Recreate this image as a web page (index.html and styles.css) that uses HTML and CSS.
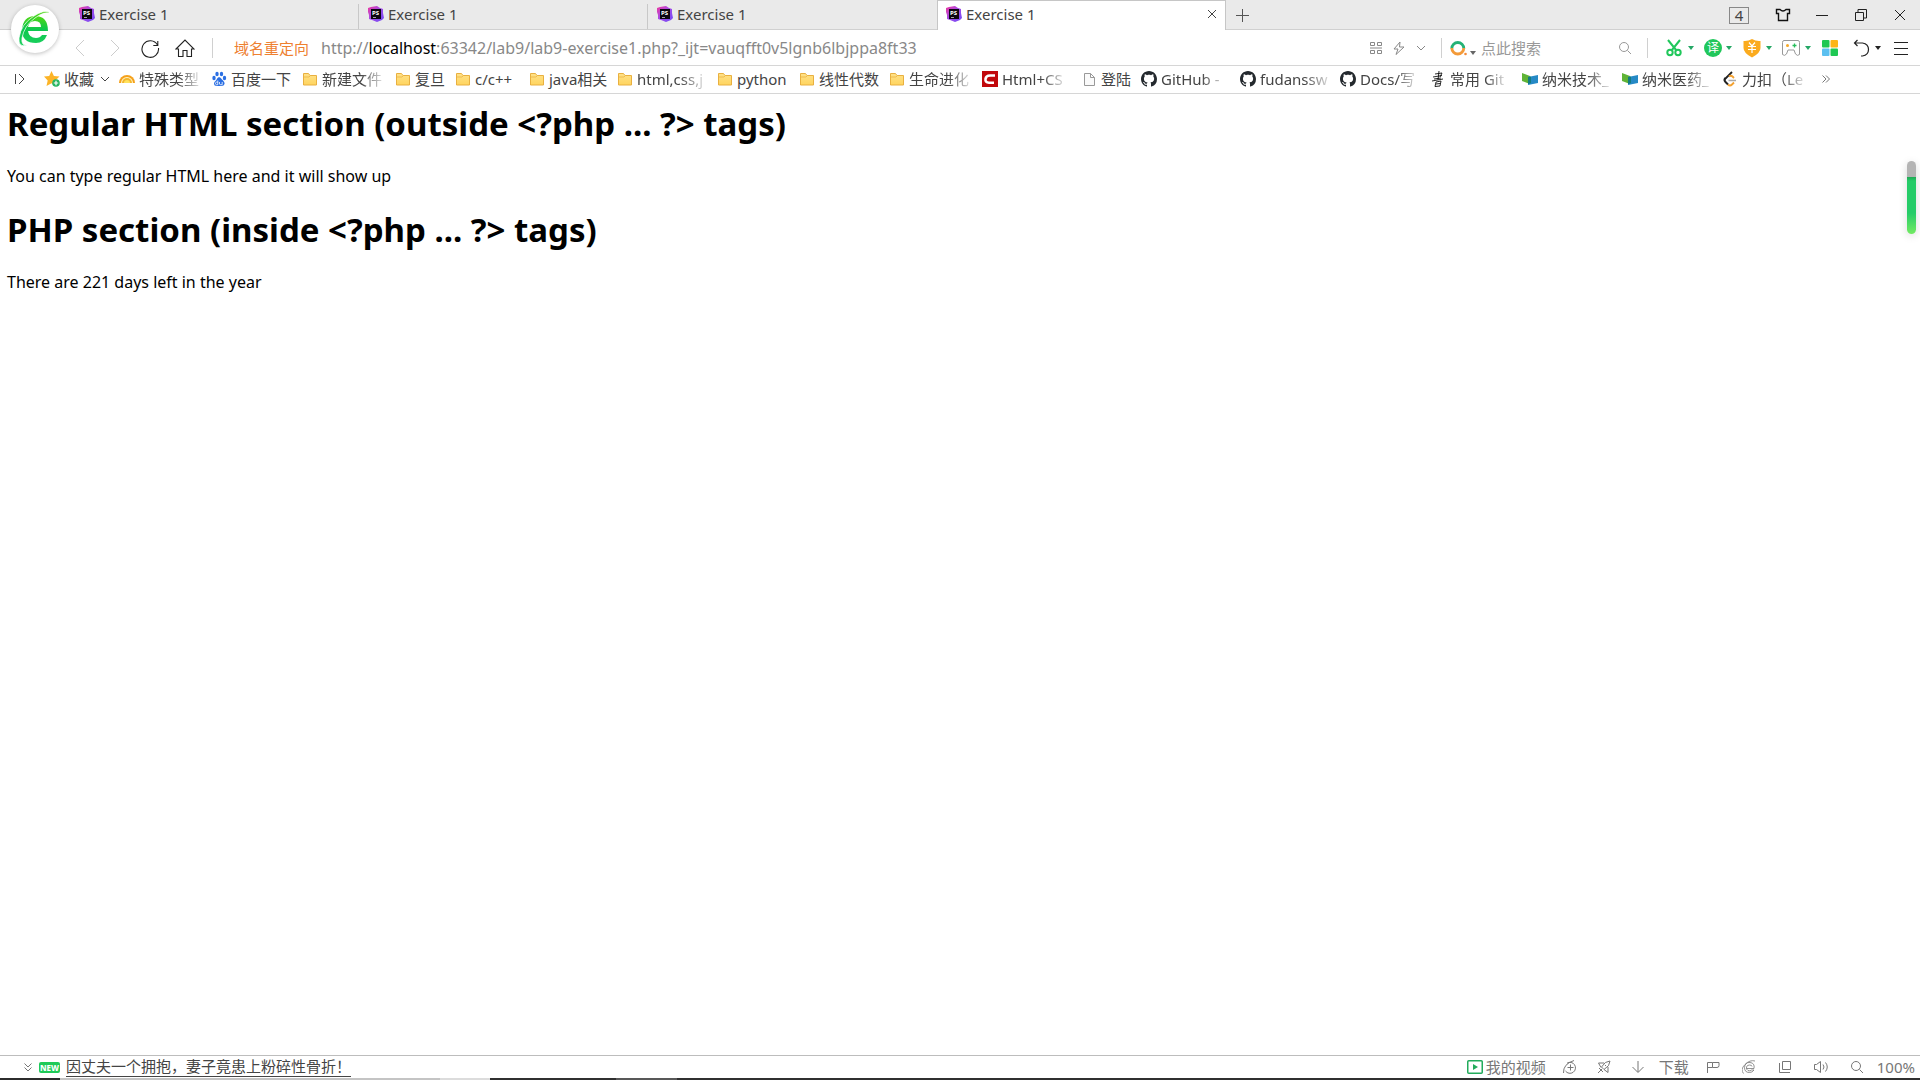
FILE: index.html
```
<!DOCTYPE html>
<html lang="zh-CN">
<head>
<meta charset="utf-8">
<title>Exercise 1</title>
<link rel="stylesheet" href="styles.css">
</head>
<body>
<svg class="sprite" aria-hidden="true">
  <defs>
    <linearGradient id="psg" x1="0" y1="0" x2="1" y2="1"><stop offset="0" stop-color="#f0389b"/><stop offset=".45" stop-color="#a64be8"/><stop offset="1" stop-color="#6f4bf5"/></linearGradient>
    <linearGradient id="fold" x1="0" y1="0" x2="0" y2="1"><stop offset="0" stop-color="#ffe28a"/><stop offset="1" stop-color="#ffd45e"/></linearGradient>
    <linearGradient id="eg" x1="0" y1="0" x2="0" y2="1"><stop offset="0" stop-color="#52d813"/><stop offset=".5" stop-color="#0cc84e"/><stop offset="1" stop-color="#19cf5c"/></linearGradient>
  </defs>
  <symbol id="ps" viewBox="0 0 16 16"><path d="M0 2l3-1 6-1 3 2 3 1v4l1 5-2 2-5 2-5-2-3-1V9L0 6z" fill="url(#psg)"/><path d="M3 3h10v10H3z" fill="#0b0610"/><text x="4" y="9" class="psmark">PS</text><path d="M5 11.500h3" stroke="#ccc" stroke-width=".8"/></symbol>
  <symbol id="folder" viewBox="0 0 16 16"><path d="M1.500 2.500h5l1.500 2h6.500v9.500h-13z" fill="url(#fold)" stroke="#e9b040"/><path d="M2 6h5l1.500-1.500" fill="none" stroke="#efbd50"/></symbol>
  <symbol id="github" viewBox="0 0 16 16"><path fill="#24292e" d="M8 0C3.580 0 0 3.580 0 8c0 3.540 2.290 6.530 5.470 7.590.4.070.55-.17.55-.38 0-.19-.01-.82-.01-1.490-2.010.37-2.530-.49-2.690-.94-.09-.23-.48-.94-.82-1.130-.28-.15-.68-.52-.01-.53.63-.01 1.080.58 1.230.82.72 1.210 1.870.87 2.330.66.07-.52.28-.87.51-1.070-1.780-.2-3.640-.89-3.640-3.950 0-.87.31-1.590.82-2.150-.08-.2-.36-1.020.08-2.120 0 0 .67-.21 2.200.82.640-.18 1.320-.27 2-.27s1.360.09 2 .27c1.530-1.040 2.200-.82 2.200-.82.44 1.100.16 1.920.08 2.120.51.56.82 1.270.82 2.150 0 3.070-1.870 3.750-3.650 3.950.29.25.54.73.54 1.480 0 1.070-.01 1.930-.01 2.200 0 .21.15.46.55.38A8.010 8.010 0 0 0 16 8c0-4.420-3.580-8-8-8z"/></symbol>
  <symbol id="nano" viewBox="0 0 16 16"><path d="M0 2l8 3v8l-8-3z" fill="#5fb336"/><path d="M6 6l10-2v8L6 14z" fill="#2589c5"/><path d="M6 6l3-.6V12l-3 1z" fill="#137c80"/></symbol>
  <symbol id="chev" viewBox="0 0 10 10"><path d="M1 3l4 4 4-4" fill="none" stroke="currentColor"/></symbol>
  <symbol id="caret" viewBox="0 0 6 4"><path d="M0 0h6L3 4z" fill="currentColor"/></symbol>
  <symbol id="mag" viewBox="0 0 14 14"><circle cx="6" cy="6" r="4.500" fill="none" stroke="currentColor"/><path d="M9.500 9.500L13 13" stroke="currentColor"/></symbol>
</svg>

<header class="browser">
  <button class="logo" aria-label="浏览器菜单"><svg width="34" height="40" viewBox="0 0 34 40"><path d="M30 22H10q1 7 8 7 4 0 6-3h5q-3 8-11 8Q4 34 4 21 5 7 17 7q13 0 13 15zM10 18h13q0-6-6-6-6 0-7 6z" fill="url(#eg)" fill-rule="evenodd"/><path d="M31 3Q25 1 16 7 3 15 1 29q-1 10 8 7Q3 37 4 29 6 17 17 9q8-6 14-5z" fill="url(#eg)" stroke="#fff" stroke-width=".7"/></svg></button>
  <nav class="tabs" aria-label="标签页">
    <a class="tab" href="#"><svg class="i16"><use href="#ps"/></svg>Exercise 1</a>
    <a class="tab" href="#"><svg class="i16"><use href="#ps"/></svg>Exercise 1</a>
    <a class="tab" href="#"><svg class="i16"><use href="#ps"/></svg>Exercise 1</a>
    <div class="tab active"><svg class="i16"><use href="#ps"/></svg>Exercise 1<button class="close" aria-label="关闭标签页"><svg width="10" height="10" viewBox="0 0 10 10"><path d="M1 1l8 8M9 1L1 9" stroke="#444"/></svg></button></div>
    <button class="newtab" aria-label="新标签页"><svg width="14" height="14" viewBox="0 0 14 14"><path d="M7.500 1v13M1 7.500h13" stroke="#555"/></svg></button>
    <div class="window">
      <button class="count">4</button>
      <button aria-label="皮肤"><svg width="16" height="14" viewBox="0 0 16 14"><path d="M1.500 1.500H5q3 3 6 0h3.500v4H12.500v7h-9v-7h-2z" fill="none" stroke="#111" stroke-width="1.400"/></svg></button>
      <button aria-label="最小化"><svg width="14" height="14" viewBox="0 0 14 14"><path d="M1 7.500h12" stroke="#222"/></svg></button>
      <button aria-label="还原"><svg width="12" height="12" viewBox="0 0 12 12"><path d="M.5 3.500h8v8h-8zM3 3V.5h8.500V9H9" fill="none" stroke="#222"/></svg></button>
      <button aria-label="关闭"><svg width="12" height="12" viewBox="0 0 12 12"><path d="M1 1l10 10M11 1L1 11" stroke="#222"/></svg></button>
    </div>
  </nav>

  <div class="address">
    <div class="navigate">
      <button class="off" aria-label="后退"><svg width="10" height="18" viewBox="0 0 10 18"><path d="M9 1L1 9l8 8" fill="none" stroke="currentColor"/></svg></button>
      <button class="off" aria-label="前进"><svg width="10" height="18" viewBox="0 0 10 18"><path d="M1 1l8 8-8 8" fill="none" stroke="currentColor"/></svg></button>
      <button aria-label="刷新"><svg width="20" height="20" viewBox="0 0 20 20"><path d="M17.500 7A8.300 8.300 0 1 0 18.500 10M17.800 3v4.500h-4.500" fill="none" stroke="currentColor" stroke-width="1.100"/></svg></button>
      <button aria-label="主页"><svg width="20" height="20" viewBox="0 0 20 20"><path d="M1 11l9-9 9 9h-2.500v7.500h-4.500v-6H8v6H3.500V11z" fill="none" stroke="currentColor" stroke-width="1.100"/></svg></button>
    </div>
    <span class="divider"></span>
    <span class="redirect">域名重定向</span>
    <div class="url" role="textbox" contenteditable="true" spellcheck="false" aria-label="网址">http://<b>localhost</b>:63342/lab9/lab9-exercise1.php?_ijt=vauqfft0v5lgnb6lbjppa8ft33</div>
    <div class="urltools">
      <button aria-label="二维码"><svg width="12" height="12" viewBox="0 0 12 12"><path d="M.5 .5h4v3h-4zM7.500 .5h4v3h-4zM.5 8.500h4v3h-4zM7.500 8.500h4v3h-4zM0 6h12" fill="none" stroke="currentColor"/></svg></button>
      <button aria-label="极速模式"><svg width="12" height="14" viewBox="0 0 12 14"><path d="M7 1L1 8h4l-2 5.500L11 6H6.500z" fill="none" stroke="currentColor"/></svg></button>
      <button aria-label="更多"><svg width="10" height="10"><use href="#chev"/></svg></button>
    </div>
    <form class="search">
      <button type="button" class="engine" aria-label="搜索引擎"><svg width="18" height="16" viewBox="0 0 18 16"><path d="M1.800 8.500a6 6 0 1 1 12 0" fill="none" stroke="#24b276" stroke-width="2.800"/><path d="M1.800 8a6 6 0 0 0 12 0" fill="none" stroke="#f39a39" stroke-width="2.800"/><circle cx="15.500" cy="14" r="1.300" fill="#f58b37"/></svg><svg class="low" width="6" height="4"><use href="#caret"/></svg></button>
      <input type="text" placeholder="点此搜索" aria-label="搜索">
      <button class="go" type="button" aria-label="开始搜索"><svg width="14" height="14"><use href="#mag"/></svg></button>
    </form>
    <div class="tools">
      <button aria-label="截图"><svg width="20" height="20" viewBox="0 0 20 20"><g fill="none" stroke="#20c75b" stroke-width="2"><circle cx="6" cy="14.500" r="2.700"/><circle cx="14" cy="14.500" r="2.700"/><path d="M4 2l8.500 10.500M16 2L7.500 12.500"/></g></svg><svg width="6" height="4"><use href="#caret"/></svg></button>
      <button aria-label="翻译"><span class="translate">译</span><svg width="6" height="4"><use href="#caret"/></svg></button>
      <button aria-label="网银"><svg width="20" height="20" viewBox="0 0 20 20"><path d="M10 1q4 2.500 8.500 2v7q0 5-8.500 9.500Q1.500 15 1.500 10V3Q6 3.500 10 1z" fill="#fbab1e"/><path d="M7 4.500l3 3.500 3-3.500M6 8.500h8M6 11.500h8M10 8v7" fill="none" stroke="#fff" stroke-width="1.200"/></svg><svg width="6" height="4"><use href="#caret"/></svg></button>
      <button aria-label="游戏"><svg width="20" height="20" viewBox="0 0 20 20"><path d="M3 2.500h14q1.500 0 1.500 2v12q-2 2-4-.5L13 12H7l-1.500 4q-2 2.500-4 .5v-12q0-2 1.500-2z" fill="none" stroke="#999"/><circle cx="6.500" cy="7.500" r="1.500" fill="#f7a825"/><path d="M13.500 5.500v4M11.500 7.500h4" stroke="#28bd5c" stroke-width="1.300"/></svg><svg width="6" height="4"><use href="#caret"/></svg></button>
      <button class="single" aria-label="扩展"><svg width="16" height="16" viewBox="0 0 16 16"><rect width="7.500" height="7.500" rx="1" fill="#1fc853"/><rect x="8.500" width="7.500" height="7.500" rx="1" fill="#fdb517"/><rect y="8.500" width="7.500" height="7.500" rx="1" fill="#5cc0f0"/><rect x="8.500" y="8.500" width="7.500" height="7.500" rx="1" fill="#1fc853"/></svg></button>
      <button class="dark" aria-label="恢复"><svg width="18" height="18" viewBox="0 0 18 18"><path d="M4.500 1L1.500 4l3 3M1.500 4h8q6 1 6 6.500T9.500 17H8" fill="none" stroke="#222" stroke-width="1.200"/></svg><svg width="6" height="4"><use href="#caret"/></svg></button>
      <button aria-label="菜单"><svg width="16" height="16" viewBox="0 0 16 16"><path d="M1 2.500h14M1 8.500h14M1 14.500h14" stroke="#222" stroke-width="1.200"/></svg></button>
    </div>
  </div>

  <nav class="bookmarks" aria-label="收藏栏">
    <button aria-label="展开侧栏"><svg width="10" height="12" viewBox="0 0 10 12"><path d="M.5 1v10M4 1l5 5-5 5" fill="none" stroke="#444"/></svg></button>
    <a href="#"><svg class="i16" viewBox="0 0 16 16"><path d="M7.500 0l2.400 5 5.600.6-4.200 3.800 1.200 5.600-5-2.800-5 2.800 1.200-5.600L0 5.600 5.200 5z" fill="#fcb427"/><circle cx="12" cy="12" r="3.800" fill="#27b561"/><path d="M12 9.800v4.400M9.800 12h4.400" stroke="#fff" stroke-width="1.200"/></svg><span>收藏</span><svg class="more" width="10" height="10"><use href="#chev"/></svg></a>
    <a href="#"><svg class="i16" viewBox="0 0 16 16"><path d="M0 12a8 8 0 0 1 16 0z" fill="#f5a11c"/><path d="M2 12a6 6 0 0 1 12 0z" fill="#fff3c4"/><path d="M3 12a5 5 0 0 1 10 0z" fill="#f4b62c"/><path d="M5 12a3 3 0 0 1 6 0z" fill="#ffe25e"/></svg><span class="fade">特殊类型</span></a>
    <a href="#"><svg class="i16" viewBox="0 0 16 16"><g fill="#2b6fe3"><ellipse cx="3" cy="7" rx="1.700" ry="2.200"/><ellipse cx="6" cy="3" rx="1.700" ry="2.300"/><ellipse cx="10.500" cy="3" rx="1.700" ry="2.300"/><ellipse cx="13.500" cy="7" rx="1.700" ry="2.200"/><path d="M8 6q1.500 0 3 2.500 3 2.500 2.500 4.500t-3 2H6q-3 0-3-2.500 0-1.500 2-3Q6.500 6 8 6z"/></g><path d="M6.800 9.500v4.200H5.500q-1-.2-1-1.300t1-1.300h1.300M8.500 11v2q.2.700 1 .7h1.700V11" fill="none" stroke="#fff" stroke-width=".8"/></svg><span>百度一下</span></a>
    <a href="#"><svg class="i16"><use href="#folder"/></svg><span class="fade">新建文件</span></a>
    <a href="#"><svg class="i16"><use href="#folder"/></svg><span>复旦</span></a>
    <a href="#"><svg class="i16"><use href="#folder"/></svg><span>c/c++</span></a>
    <a href="#"><svg class="i16"><use href="#folder"/></svg><span>java相关</span></a>
    <a href="#"><svg class="i16"><use href="#folder"/></svg><span class="fade">html,css,j</span></a>
    <a href="#"><svg class="i16"><use href="#folder"/></svg><span>python</span></a>
    <a href="#"><svg class="i16"><use href="#folder"/></svg><span>线性代数</span></a>
    <a href="#"><svg class="i16"><use href="#folder"/></svg><span class="fade">生命进化</span></a>
    <a href="#"><svg class="i16" viewBox="0 0 16 16"><path d="M0 0h16v16H0z" fill="#c1080c"/><path d="M13 4.500H8q-4 0-4.500 3.500T7 11.800h5" fill="none" stroke="#fff" stroke-width="2.600"/></svg><span class="fade">Html+CS</span></a>
    <a href="#"><svg class="i16" viewBox="0 0 16 16"><path d="M3.500 2.500h6l4 4v8h-10zM9.500 2.500v4h4" fill="#fafafa" stroke="#999"/></svg><span>登陆</span></a>
    <a href="#"><svg class="i16"><use href="#github"/></svg><span class="fade">GitHub - </span></a>
    <a href="#"><svg class="i16"><use href="#github"/></svg><span class="fade">fudanssw</span></a>
    <a href="#"><svg class="i16"><use href="#github"/></svg><span class="fade">Docs/写</span></a>
    <a href="#"><svg class="i16" viewBox="0 0 16 16"><path d="M5 3l7-1-2 4M3 6l9-1.500M4 8l7-1M2 10l11-2M9 0L8 9M6 11l5-1-1 5-5 .5zM6 13l4-.5" fill="none" stroke="#111" stroke-width=".9"/></svg><span class="fade">常用 Git</span></a>
    <a href="#"><svg class="i16"><use href="#nano"/></svg><span class="fade">纳米技术_</span></a>
    <a href="#"><svg class="i16"><use href="#nano"/></svg><span class="fade">纳米医药_</span></a>
    <a href="#"><svg class="i16" viewBox="0 0 16 16"><path d="M10 1L3 8" fill="none" stroke="#222" stroke-width="1.800"/><path d="M3.500 7q-2 2 0 4l2.500 2.500" fill="none" stroke="#222" stroke-width="2"/><path d="M6 13.500q2 2 4 0l2-2M7 5.500q2-1.500 3.500 0L12 7" fill="none" stroke="#f3a130" stroke-width="1.800"/><path d="M6.500 9.500H14" stroke="#aaa" stroke-width="1.500"/></svg><span class="fade">力扣（Le</span></a>
    <button class="overflow" aria-label="更多收藏"><svg width="8" height="8" viewBox="0 0 8 8"><path d="M.5 0.500l3.500 3.500L.5 7.500M4 .5L7.500 4 4 7.500" fill="none" stroke="#777"/></svg></button>
  </nav>
</header>

<main class="page">
  <h1>Regular HTML section (outside &lt;?php ... ?&gt; tags)</h1>
  <p>You can type regular HTML here and it will show up</p>
  <h1>PHP section (inside &lt;?php ... ?&gt; tags)</h1>
  <p>There are 221 days left in the year</p>
  <div class="thumb"></div>
</main>

<footer class="status">
  <button aria-label="收起"><svg width="8" height="9" viewBox="0 0 8 9"><path d="M.5.5L4 4 7.500.5M.5 4.500L4 8l3.500-3.500" fill="none" stroke="#777"/></svg></button>
  <span class="new">NEW</span>
  <a class="news" href="#">因丈夫一个拥抱，妻子竟患上粉碎性骨折！</a>
  <div class="statustools">
    <button class="label"><svg width="16" height="14" viewBox="0 0 16 14"><rect x=".75" y=".75" width="14.500" height="12.500" rx="1" fill="none" stroke="#22ab5b" stroke-width="1.500"/><path d="M6 4l5 3-5 3z" fill="#22ab5b"/></svg>我的视频</button>
    <div class="pair">
      <button aria-label="加速器"><svg width="14" height="14" viewBox="0 0 14 14"><path d="M4 3.200A5.500 5.500 0 1 1 2.500 11M.5 13Q0 4 11 .5M7.500 4.500v6M4.500 7.500h6" fill="none" stroke="currentColor"/></svg></button>
      <button aria-label="火箭"><svg width="14" height="14" viewBox="0 0 14 14"><path d="M13 1Q8 1 4.500 7L7 9.500Q13 6 13 1zM7 3H1.500L4 7.500M11 7v5.500L7 9.500M5 9l-4 4M8 5l1 1M2 8l4 4" fill="none" stroke="currentColor"/></svg></button>
      <button aria-label="下载列表"><svg width="14" height="14" viewBox="0 0 14 14"><path d="M7 1v11M1.500 7L7 12.500 12.500 7" fill="none" stroke="currentColor"/></svg></button>
    </div>
    <button class="label">下载</button>
    <div class="icons">
      <button aria-label="标记"><svg width="14" height="14" viewBox="0 0 14 14"><path d="M1.500 13V2.500h5v5h-5M6.500 2.500h6.500v3q0 2-2 2H6.500" fill="none" stroke="currentColor"/></svg></button>
      <button aria-label="内核"><svg width="14" height="14" viewBox="0 0 14 14"><path d="M4.500 8.500h7.500Q13 3 8 2.500T2.500 7.500q0 5 5 5 3 0 4.500-2.500H9.500Q8 11.500 6 10.500T4.500 7Q5 5 7.500 5T10 6.500M13 1Q8-.5 3 4.500T1.500 13.500" fill="none" stroke="currentColor" stroke-width=".8"/></svg></button>
      <button aria-label="小窗"><svg width="14" height="14" viewBox="0 0 14 14"><path d="M4.500 1.500h8v8h-8zM1.500 3v9.500H12" fill="none" stroke="currentColor"/></svg></button>
      <button aria-label="声音"><svg width="16" height="14" viewBox="0 0 16 14"><path d="M1.500 4.500h2l4-3v11l-4-3h-2zM10 4.500q2 2.500 0 5M12.500 2.500q3.500 4.500 0 9" fill="none" stroke="currentColor"/></svg></button>
      <button aria-label="缩放"><svg width="14" height="14"><use href="#mag"/></svg></button>
    </div>
    <button class="label">100%</button>
  </div>
</footer>
<div class="taskbar"></div>
</body>
</html>
```
FILE: styles.css
```
* { box-sizing: border-box; }

body {
  margin: 0;
  min-height: 100vh;
  display: flex;
  flex-direction: column;
  background: #fff;
  color: #444;
  font: 15px/20px "Noto Sans", "Noto Sans CJK SC", sans-serif;
}

button {
  display: flex;
  align-items: center;
  justify-content: center;
  padding: 0;
  border: 0;
  background: none;
  color: inherit;
  font: inherit;
}

a { color: inherit; text-decoration: none; }
svg { display: block; flex: none; }
.sprite { position: absolute; width: 0; height: 0; }
.psmark { fill: #fff; font-size: 6px; font-weight: 700; }
.i16 { width: 16px; height: 16px; }
.browser { position: relative; }

.logo {
  position: absolute;
  left: 11px;
  top: 5px;
  width: 48px;
  height: 48px;
  border-radius: 50%;
  background: #fff;
  box-shadow: 0 1px 4px rgba(0, 0, 0, .25);
}

/* Tab strip */
.tabs {
  display: flex;
  height: 30px;
  padding-left: 70px;
  background: #eaeaea;
  box-shadow: inset 0 -1px #d0d0d0;
}

.tab {
  display: flex;
  align-items: center;
  gap: 4px;
  flex: 0 1 289px;
  padding: 0 9px 2px;
  background: linear-gradient(#c8c8c8, #c8c8c8) right 4px / 1px 25px no-repeat;
}

.tab:nth-child(3) { background: none; }
.tab.active {
  padding: 0 8px 3px;
  background: #fff;
  border: 1px solid #c6c6c6;
  border-bottom: 0;
}
.close { margin-left: auto; }
.newtab { width: 32px; }
.window { display: flex; align-items: center; margin-left: auto; padding-right: 1px; }
.window button { width: 39px; }
.window .count { width: 20px; height: 17px; margin-right: 14px; border: 1px solid #888; }

/* Address row */
.address {
  display: flex;
  align-items: center;
  height: 36px;
  padding: 0 9px 0 62px;
  border-bottom: 1px solid #d6d6d6;
}

.navigate { display: flex; color: #222; }
.navigate button { width: 35px; }
.navigate .off { color: #ccc; }
.divider { width: 1px; height: 20px; margin: 0 21px 0 10px; background: #d0d0d0; }
.redirect { color: #ee8030; }
.url {
  flex: 1;
  padding-left: 12px;
  color: #888;
  font-size: 16px;
  white-space: nowrap;
  overflow: hidden;
}
.url b { font-weight: 400; color: #000; }
.urltools { display: flex; gap: 11px; padding-right: 15px; color: #888; }

.search {
  display: flex;
  align-items: center;
  width: 207px;
  height: 20px;
  border: solid #d0d0d0;
  border-width: 0 1px;
}

.engine { gap: 2px; padding-left: 8px; color: #666; }
.engine .low { align-self: flex-end; margin-bottom: 1px; }
.search input {
  flex: 1;
  min-width: 0;
  padding: 0 0 0 5px;
  border: 0;
  background: none;
  font: inherit;
}
.search input::placeholder { color: #999; opacity: 1; }
.go { margin-right: 15px; color: #999; }

.tools { display: flex; padding-left: 16px; color: #24a765; }
.tools button { gap: 4px; width: 30px; margin-right: 9px; }
.tools .single { width: 20px; margin-right: 13px; }
.tools .dark { width: 28px; margin-right: 10px; color: #222; }
.tools button:last-child { width: 20px; margin-right: 0; }
.translate {
  width: 18px;
  height: 18px;
  border-radius: 50%;
  background: #20c75b;
  color: #fff;
  font-size: 12px;
  line-height: 18px;
}

/* Bookmark bar: one column for each saved link */
.bookmarks {
  display: grid;
  grid-template-columns: 29px 75px 92px 91px 93px 60px 74px 88px 100px 82px 90px 93px 99px 60px 99px 100px 90px 92px 100px 100px 100px 8px;
  align-items: center;
  height: 28px;
  padding: 0 0 2px 15px;
  border-bottom: 1px solid #d6d6d6;
}

.bookmarks a { display: flex; align-items: center; gap: 4px; min-width: 0; }
.bookmarks button { justify-content: flex-start; }
.bookmarks span { white-space: pre; }
.bookmarks a > .fade { mask-image: linear-gradient(90deg, #000 65%, rgba(0, 0, 0, .2)); }
.more { margin-left: 2px; }

/* Web page */
.page {
  position: relative;
  flex: 1;
  padding: 8px 7px;
  color: #000;
  font: 16px/21px "Noto Sans", "Noto Sans CJK SC", sans-serif;
}

h1 { margin: 0 0 21px; font-size: 33px; line-height: 43px; }
p { margin: 0 0 21px; }

.thumb {
  position: absolute;
  right: 4px;
  top: 67px;
  width: 9px;
  height: 73px;
  border-radius: 5px;
  background: linear-gradient(#b4b4b4 16px, #1fa854 16px, #25cc68 20px, #25cc68 52px, #72ea62);
  box-shadow: 0 2px 8px rgba(0, 0, 0, .15);
}

/* Status bar */
.status {
  display: flex;
  align-items: center;
  height: 23px;
  padding: 0 5px 0 24px;
  border-top: 1px solid #bdbdbd;
}

.new {
  width: 21px;
  height: 11px;
  margin: 0 6px 0 7px;
  border-radius: 2px;
  background: #1fca58;
  color: #fff;
  font-size: 8px;
  font-weight: 800;
  line-height: 11px;
  text-align: center;
}

.news { border-bottom: 1px solid #444; line-height: 19px; }
.statustools { display: flex; align-items: center; margin-left: auto; color: #777; }
.label { gap: 3px; }
.pair { display: flex; padding: 0 4px 0 7px; }
.pair button { width: 34px; }
.icons { display: flex; padding: 0 2px 0 6px; }
.icons button { width: 36px; }

.taskbar {
  height: 2px;
  background: linear-gradient(90deg, #2c2c2c 60px, #c4c4c4 60px, #c4c4c4 440px, #dcdcdc 440px, #dcdcdc 490px, #303030 490px, #303030 616px, #585858 616px, #585858 677px, #303030 677px);
}
```
